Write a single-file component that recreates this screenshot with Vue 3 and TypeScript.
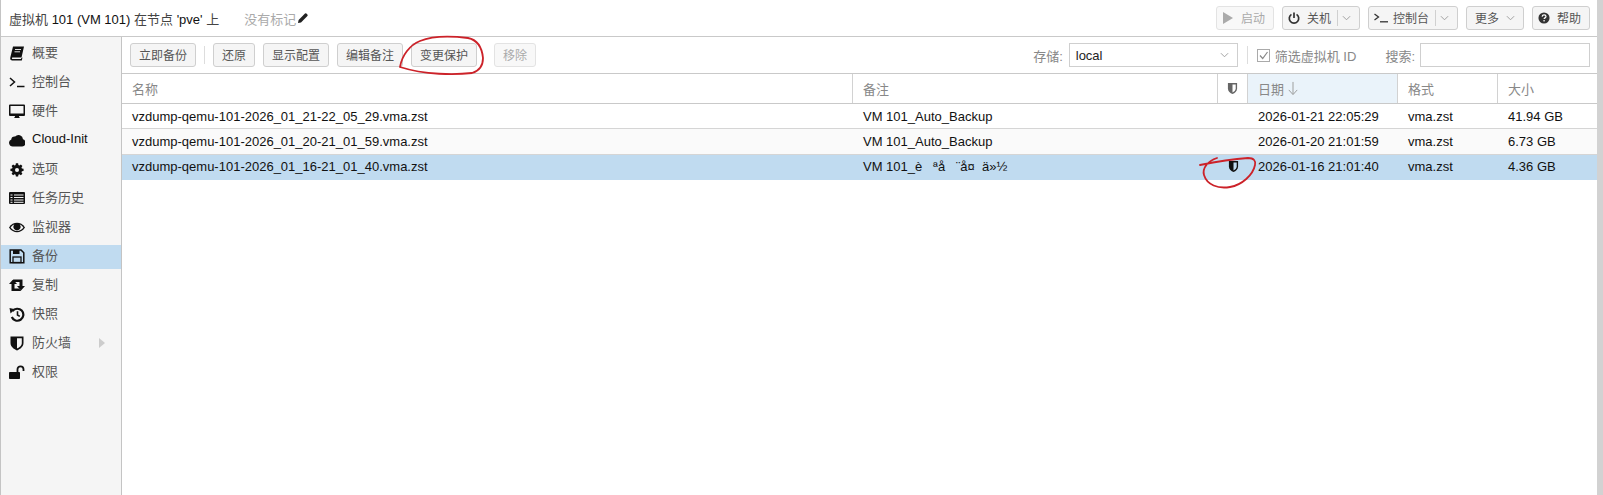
<script setup lang="ts">
type Cell = { name: string; note: string; prot: boolean; date: string; fmt: string; size: string; sel?: boolean }
const rows: Cell[] = [
  { name: 'vzdump-qemu-101-2026_01_21-22_05_29.vma.zst', note: 'VM 101_Auto_Backup', prot: false, date: '2026-01-21 22:05:29', fmt: 'vma.zst', size: '41.94 GB' },
  { name: 'vzdump-qemu-101-2026_01_20-21_01_59.vma.zst', note: 'VM 101_Auto_Backup', prot: false, date: '2026-01-20 21:01:59', fmt: 'vma.zst', size: '6.73 GB' },
  { name: 'vzdump-qemu-101-2026_01_16-21_01_40.vma.zst', note: 'VM 101_è   ªå   ¨å¤  ä»½', prot: true, date: '2026-01-16 21:01:40', fmt: 'vma.zst', size: '4.36 GB', sel: true },
]
const side = [
  { id: 'book', label: '概要' }, { id: 'term', label: '控制台' }, { id: 'desk', label: '硬件' },
  { id: 'cloud', label: 'Cloud-Init', dark: true }, { id: 'gear', label: '选项' }, { id: 'list', label: '任务历史' },
  { id: 'eye', label: '监视器' }, { id: 'save', label: '备份', sel: true }, { id: 'retweet', label: '复制' },
  { id: 'history', label: '快照' }, { id: 'shield', label: '防火墙', arrow: true }, { id: 'unlock', label: '权限' },
]
</script>

<template>
  <div class="page">
    <header class="top">
      <span class="title">虚拟机 <b>101 (VM 101)</b> 在节点 <b>'pve'</b> 上</span>
      <span class="tags">没有标记</span>
      <svg class="pencil" viewBox="0 0 12 12"><path d="M1 11l.6-3L8 1.6a1 1 0 0 1 1.4 0l1 1a1 1 0 0 1 0 1.4L4 10.400z" fill="#222"/></svg>
      <span class="grow"></span>
      <button class="btn off icb"><svg class="ic play" viewBox="0 0 10 12"><path d="M0 0l10 6-10 6z" fill="#aaa"/></svg>启动</button>
      <button class="btn icb">
        <svg class="ic" viewBox="0 0 14 14"><path d="M4 2.800a5.500 5.500 0 1 0 6 0" fill="none" stroke="#333" stroke-width="2"/><path d="M7 .5v6.500" stroke="#333" stroke-width="2"/></svg>关机<i class="split"></i><svg class="chev" viewBox="0 0 10 6"><path d="M1 1l4 4 4-4" fill="none" stroke="#999"/></svg>
      </button>
      <button class="btn icb">
        <svg class="ic wide" viewBox="0 0 14 10"><path d="M.5 1l4 3-4 3" fill="none" stroke="#333" stroke-width="1.300"/><path d="M6 8.800h8" stroke="#333" stroke-width="1.300"/></svg>控制台<i class="split"></i><svg class="chev" viewBox="0 0 10 6"><path d="M1 1l4 4 4-4" fill="none" stroke="#999"/></svg>
      </button>
      <button class="btn">更多<svg class="chev more" viewBox="0 0 10 6"><path d="M1 1l4 4 4-4" fill="none" stroke="#999"/></svg></button>
      <button class="btn icb"><svg class="ic" viewBox="0 0 14 14"><circle cx="7" cy="7" r="6.500" fill="#333"/><path d="M4.800 5.300c.2-1.300 1.100-2 2.300-2 1.300 0 2.200.8 2.200 1.900 0 1.700-2.100 1.600-2.100 3" fill="none" stroke="#fff" stroke-width="1.500"/><rect x="6.300" y="9.400" width="1.600" height="1.600" fill="#fff"/></svg>帮助</button>
    </header>

    <div class="body">
      <nav class="side">
        <div v-for="s in side" :key="s.id" class="item" :class="{ sel: s.sel, dark: s.dark }">
          <svg class="sico" viewBox="0 0 16 16">
            <g v-if="s.id === 'book'"><path d="M4 1.500h11l-2.500 11H3.500c-.8 0-.8 1.500 0 1.500H12l.3-1 1.200-.5-.7 2.900H3C1.300 15.400 1 14 1.300 12.600z" fill="#111"/><path d="M6 4.500h6M5.500 6.800H11" stroke="#f5f5f5" stroke-width=".9"/></g>
            <g v-else-if="s.id === 'term'"><path d="M1 4l4.500 4L1 12" fill="none" stroke="#111" stroke-width="1.500"/><path d="M8 12.500h7.500" stroke="#111" stroke-width="1.500"/></g>
            <g v-else-if="s.id === 'desk'"><path d="M1 1.500h14a1 1 0 0 1 1 1v9.500a1 1 0 0 1-1 1h-5c0 1 .5 1.500 1 2H5c.5-.5 1-1 1-2H1a1 1 0 0 1-1-1V2.500a1 1 0 0 1 1-1z" fill="#111"/><rect x="1.500" y="3" width="13" height="7.500" fill="#f5f5f5"/></g>
            <path v-else-if="s.id === 'cloud'" d="M3.800 14.500A3.700 3.700 0 0 1 2.300 7.400a3 3 0 0 1 3.800-2.800A4.500 4.500 0 0 1 14 7.300a3.700 3.700 0 0 1-.8 7.200z" fill="#111"/>
            <g v-else-if="s.id === 'gear'"><path d="M6.700 1.500h2.600l.3 1.900 1.200.5 1.600-1.100 1.800 1.800-1.100 1.600.5 1.200 1.900.3v2.600l-1.900.3-.5 1.200 1.100 1.600-1.800 1.800-1.600-1.100-1.200.5-.3 1.900H6.700l-.3-1.900-1.200-.5-1.600 1.100-1.800-1.800 1.100-1.600-.5-1.200-1.900-.3V7.700l1.900-.3.5-1.200-1.100-1.600 1.800-1.800 1.600 1.100 1.200-.5z" fill="#111" transform="translate(1 1) scale(.875)"/><circle cx="8" cy="8.900" r="2" fill="#f5f5f5"/></g>
            <g v-else-if="s.id === 'list'"><rect x="0" y="2" width="16" height="12" rx="1" fill="#111"/><path d="M1.500 5h2M5 5h9.500M1.500 7.500h2M5 7.500h9.500M1.500 10h2M5 10h9.500M1.500 12.300h2M5 12.300h9.500" stroke="#f5f5f5" stroke-width="1"/></g>
            <g v-else-if="s.id === 'eye'"><path d="M0 8.500C2.200 5.200 5 3.800 8 3.800s5.800 1.400 8 4.700c-2.200 3.300-5 4.700-8 4.700S2.200 11.800 0 8.500z" fill="#111"/><path d="M1.600 8.500C3 6.600 4.600 5.700 5.300 5.500a3.500 3.500 0 1 0 5.400 0c.7.200 2.300 1.100 3.700 3-1.600 2.100-3.800 3.500-6.400 3.500s-4.800-1.400-6.400-3.500z" fill="#f5f5f5"/><circle cx="8" cy="8" r="3" fill="#111"/></g>
            <g v-else-if="s.id === 'save'"><path d="M1.200 2h10.800l2.800 2.800v9.900H1.200z" fill="none" stroke="#111" stroke-width="1.500"/><rect x="4" y="2" width="6.500" height="4" fill="#111"/><rect x="4" y="9" width="8" height="5.500" fill="none" stroke="#111" stroke-width="1.300"/></g>
            <g v-else-if="s.id === 'retweet'"><path d="M2.500 14V7H0l4-4.500L8 7H5.500v4.500H10l2.200 2.500zM13.500 2.500V9H16l-4 4.500L8 9h2.500V5H6L3.800 2.500z" fill="#111"/></g>
            <g v-else-if="s.id === 'history'"><path d="M3.500 5.200A6 6 0 1 1 2.800 11" fill="none" stroke="#111" stroke-width="2.200"/><path d="M.5 2l5.500 1.200-4.500 4.300z" fill="#111"/><path d="M8.500 5.200v3.800l2.300 1.400" fill="none" stroke="#111" stroke-width="1.600"/></g>
            <g v-else-if="s.id === 'shield'"><path d="M1.500 1.500h13v6.500c0 4-3.800 6.300-6.500 7.400C5.300 14.300 1.500 12 1.500 8z" fill="#111"/><path d="M8 3.200h4.800V8c0 2.900-2.700 4.500-4.800 5.500z" fill="#f5f5f5"/></g>
            <g v-else><rect x="0" y="8" width="11" height="7" rx=".8" fill="#111"/><path d="M8.500 8V5.300a3 3 0 0 1 6 0V7" fill="none" stroke="#111" stroke-width="1.800"/></g>
          </svg>
          <span class="txt">{{ s.label }}</span>
          <i v-if="s.arrow" class="arrow"></i>
        </div>
      </nav>

      <main class="main">
        <div class="bar">
          <button class="btn">立即备份</button>
          <i class="vsep"></i>
          <button class="btn">还原</button>
          <button class="btn">显示配置</button>
          <button class="btn">编辑备注</button>
          <button class="btn">变更保护</button>
          <button class="btn off rm">移除</button>
          <span class="grow"></span>
          <label class="lab">存储:</label>
          <div class="select">local<svg class="chev sel" viewBox="0 0 10 6"><path d="M1 1l4 4 4-4" fill="none" stroke="#999"/></svg></div>
          <i class="vsep s2"></i>
          <span class="check"><svg viewBox="0 0 13 13"><rect x=".5" y=".5" width="12" height="12" fill="#fff" stroke="#aaa"/><path d="M3 6.500l2.700 3L10.500 3" fill="none" stroke="#888" stroke-width="1.200"/></svg></span>
          <span class="lab filter">筛选虚拟机 ID</span>
          <label class="lab search">搜索:</label>
          <div class="input"></div>
        </div>

        <div class="grid">
          <div class="ghead">
            <div class="c c1">名称</div>
            <div class="c c2">备注</div>
            <div class="c c3"><svg class="shield" viewBox="0 0 12 14"><path d="M1 1h10v6c0 3-2.500 5-5 6-2.500-1-5-3-5-6z" fill="#666"/><path d="M6 2.500h3.500V7c0 2-1.800 3.500-3.500 4.300z" fill="#fff"/></svg></div>
            <div class="c c4 sorted">日期<svg class="down" viewBox="0 0 12 16"><path d="M6 1v13M1.500 9.500L6 14.500l4.500-5" fill="none" stroke="#999"/></svg></div>
            <div class="c c5">格式</div>
            <div class="c c6">大小</div>
          </div>
          <div v-for="(r, i) in rows" :key="i" class="row" :class="{ alt: i === 1, selected: r.sel }">
            <div class="c c1">{{ r.name }}</div>
            <div class="c c2">{{ r.note }}</div>
            <div class="c c3"><svg v-if="r.prot" class="shield" viewBox="0 0 12 14"><path d="M1 1h10v6c0 3-2.500 5-5 6-2.500-1-5-3-5-6z" fill="#111"/><path d="M6 2.500h3.500V7c0 2-1.800 3.500-3.500 4.300z" fill="#c0dbf0"/></svg></div>
            <div class="c c4">{{ r.date }}</div>
            <div class="c c5">{{ r.fmt }}</div>
            <div class="c c6">{{ r.size }}</div>
          </div>
        </div>
      </main>
    </div>

    <svg class="ink" viewBox="0 0 1603 495">
      <path d="M400 67C402 55 410 45 420 41C432 36 452 36 468 38C478 40 482 48 483 58C483 66 479 71 472 73C455 75 425 75 400 67" fill="none" stroke="#cc2229" stroke-width="1.800" stroke-linecap="round"/>
      <path d="M1200 165C1210 163 1235 159 1248 158C1254 158 1256 161 1255 165C1253 175 1242 185 1230 187C1218 189 1207 185 1204 175C1202 168 1208 161 1217 158" fill="none" stroke="#cc2229" stroke-width="1.800" stroke-linecap="round"/>
    </svg>
  </div>
</template>

<style>
html, body { margin: 0; background: #fff; }
</style>

<style scoped>
.page { position: relative; width: 1603px; height: 495px; overflow: hidden; font: 13px "Liberation Sans", "Noto Sans CJK SC", sans-serif; color: #111; display: flex; flex-direction: column; box-sizing: border-box; border-left: 1px solid #c4c4c4; border-right: 6px solid #d2d2d2; }
.top { height: 37px; box-sizing: border-box; border-bottom: 1px solid #c9c9c9; display: flex; align-items: center; gap: 8px; padding-right: 7px; padding-left: 8px; flex: none; }
.title { color: #444; }
.title b { font-weight: 400; color: #111; }
.tags { color: #aaa; margin-left: 17px; margin-right: -7px; }
.pencil { width: 12px; height: 12px; }
.grow { flex: 1; }
.btn { height: 24px; box-sizing: border-box; border: 1px solid #cfcfcf; border-radius: 3px; background: #f5f5f5; padding: 0 8px 1px; font: inherit; font-size: 12px; color: #555; display: inline-flex; align-items: center; white-space: nowrap; }
.btn.off { color: #aaa; border-color: #e3e3e3; background: #f8f8f8; }
.btn.icb { padding-left: 5px; }
.ic { width: 12px; height: 12px; margin-right: 7px; }
.ic.play { width: 10px; margin-left: 1px; margin-right: 8px; }
.ic.wide { width: 14px; height: 10px; margin-right: 5px; }
.split { width: 1px; height: 16px; background: #d0d0d0; margin: 0 4px 0 6px; }
.chev { width: 9px; height: 6px; }
.chev.more { margin-left: 7px; }
.body { flex: 1; display: flex; min-height: 0; }
.side { width: 120px; flex: none; background: #f5f5f5; border-right: 1px solid #c4c4c4; box-sizing: content-box; padding-top: 5px; display: flex; flex-direction: column; gap: 5px; }
.item { height: 24px; display: flex; align-items: center; padding-left: 8px; color: #555; position: relative; }
.item.dark { color: #111; }
.item.sel { background: #c0dbf0; }
.sico { width: 16px; height: 16px; margin-right: 7px; margin-bottom: 2px; flex: none; }
.txt { margin-bottom: 5px; }
.arrow { position: absolute; left: 98px; top: 6px; border-left: 6px solid #ccc; border-top: 5px solid transparent; border-bottom: 5px solid transparent; }
.main { flex: 1; min-width: 0; display: flex; flex-direction: column; }
.bar { height: 36px; box-sizing: border-box; display: flex; align-items: center; gap: 8px; padding: 0 7px 0 8px; flex: none; }
.vsep { width: 1px; height: 18px; background: #ddd; }
.rm { margin-left: 9px; }
.lab { color: #888; }
.select { width: 169px; height: 24px; box-sizing: border-box; border: 1px solid #cfcfcf; display: flex; align-items: center; justify-content: space-between; padding: 0 8px 0 6px; color: #222; margin-left: -2px; }
.s2 { margin: 0 1px; }
.check { width: 13px; height: 13px; display: inline-flex; }
.check svg { width: 13px; height: 13px; }
.filter { margin-left: -3px; }
.search { margin-left: 21px; }
.input { width: 170px; height: 24px; box-sizing: border-box; border: 1px solid #cfcfcf; margin-left: -3px; }
.grid { flex: 1; display: flex; flex-direction: column; }
.ghead, .row { display: grid; grid-template-columns: 731px 365px 30px 150px 100px 1fr; }
.ghead { height: 31px; box-sizing: border-box; border-top: 1px solid #c9c9c9; border-bottom: 1px solid #c9c9c9; }
.ghead .c { color: #888; border-right: 1px solid #d2d2d2; display: flex; align-items: center; padding-left: 10px; }
.ghead .c6 { border-right: 0; }
.ghead .c3 { padding: 0; justify-content: center; }
.sorted { background: #eaf3fa; }
.down { width: 12px; height: 15px; margin-left: 3px; }
.shield { width: 11px; height: 13px; }
.row { height: 25.300px; box-sizing: border-box; border-bottom: 1px solid #d5d5d5; align-items: center; }
.row .c { padding-left: 10px; white-space: pre; }
.row .c3 { padding: 0; display: flex; justify-content: center; }
.row.alt { background: #fafafa; }
.row.selected { background: #c0dbf0; border-bottom-color: #c0dbf0; }
.ink { position: absolute; left: -1px; top: 0; width: 1603px; height: 495px; pointer-events: none; }
</style>
